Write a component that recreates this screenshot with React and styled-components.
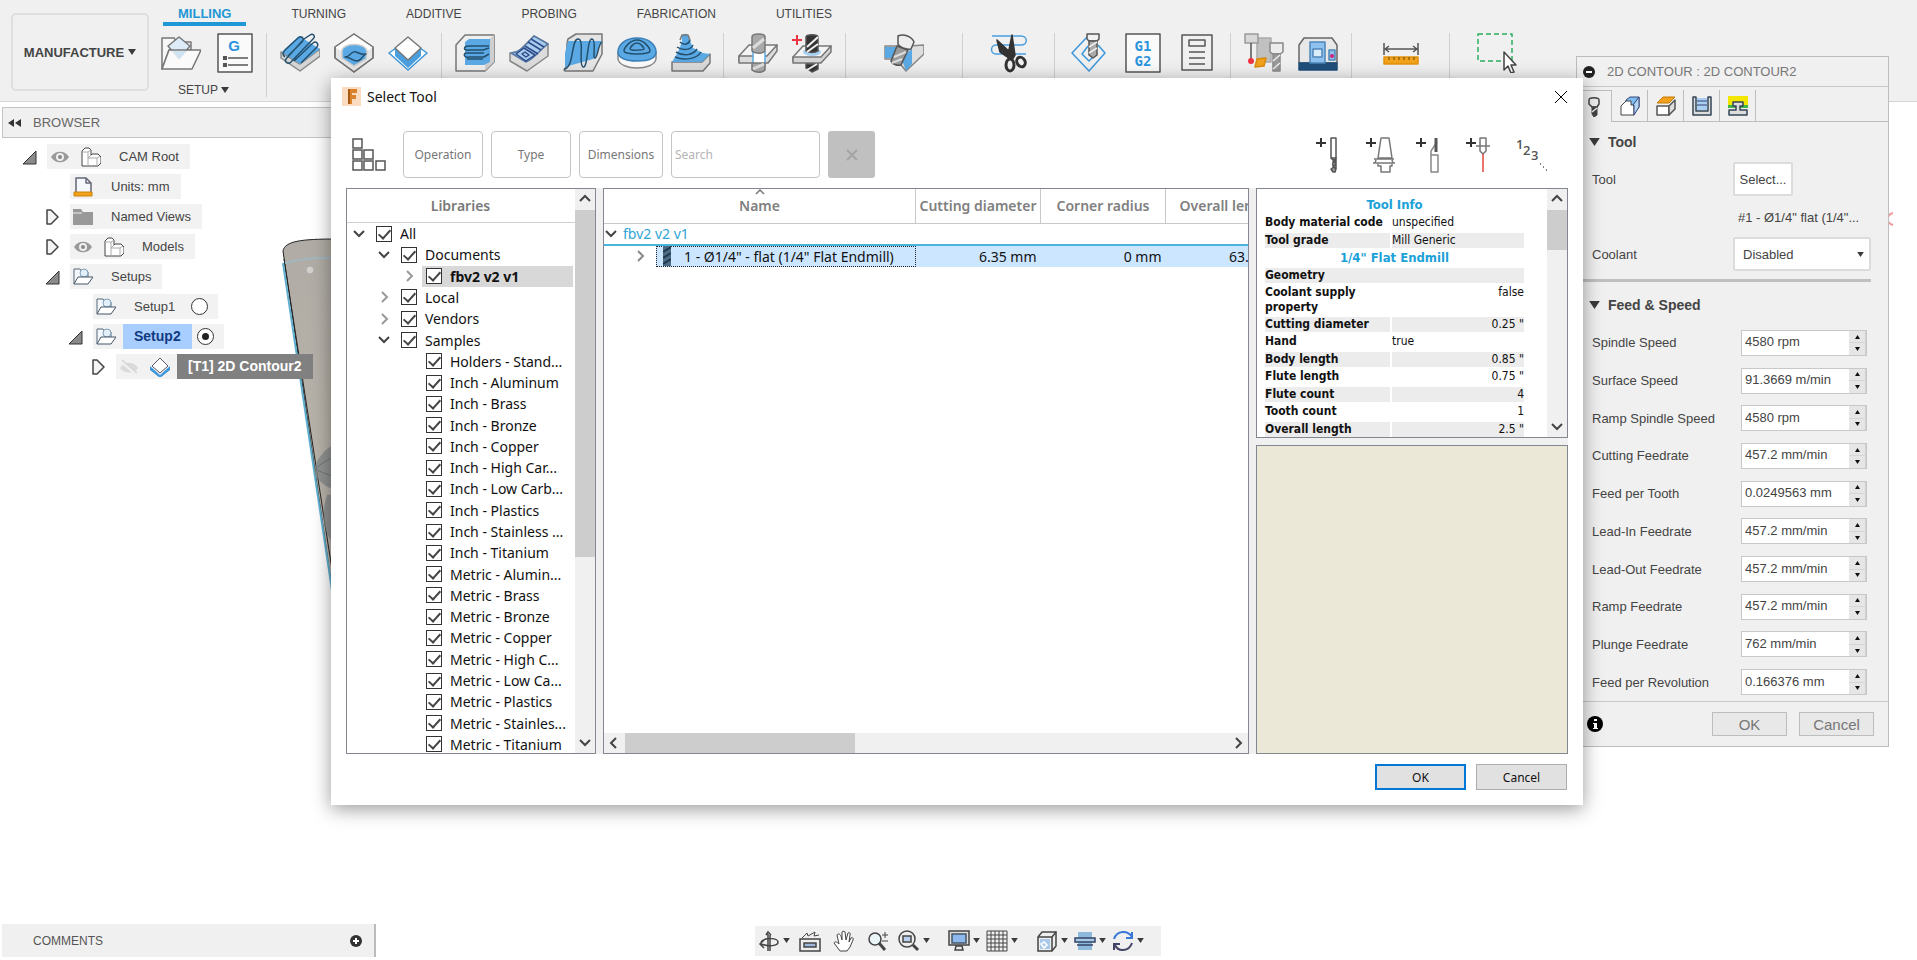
import React from 'react'
import styled, { createGlobalStyle } from 'styled-components';

const tabs = ['MILLING', 'TURNING', 'ADDITIVE', 'PROBING', 'FABRICATION', 'UTILITIES'];

const libraries = [
  { name: 'All', level: 0, open: true },
  { name: 'Documents', level: 1, open: true },
  { name: 'fbv2 v2 v1', level: 2, open: false, active: true },
  { name: 'Local', level: 1, open: false },
  { name: 'Vendors', level: 1, open: false },
  { name: 'Samples', level: 1, open: true },
  ...[
    'Holders - Stand...', 'Inch - Aluminum', 'Inch - Brass', 'Inch - Bronze', 'Inch - Copper',
    'Inch - High Car...', 'Inch - Low Carb...', 'Inch - Plastics', 'Inch - Stainless ...', 'Inch - Titanium',
    'Metric - Alumin...', 'Metric - Brass', 'Metric - Bronze', 'Metric - Copper', 'Metric - High C...',
    'Metric - Low Ca...', 'Metric - Plastics', 'Metric - Stainles...', 'Metric - Titanium',
  ].map((name) => ({ name, level: 2 })),
];

const geometry = [
  ['Coolant supply property', 'false', true],
  ['Cutting diameter', '0.25 "', true],
  ['Hand', 'true', false],
  ['Body length', '0.85 "', true],
  ['Flute length', '0.75 "', true],
  ['Flute count', '4', true],
  ['Tooth count', '1', true],
  ['Overall length', '2.5 "', true],
];

const feeds = [
  ['Spindle Speed', '4580 rpm'],
  ['Surface Speed', '91.3669 m/min'],
  ['Ramp Spindle Speed', '4580 rpm'],
  ['Cutting Feedrate', '457.2 mm/min'],
  ['Feed per Tooth', '0.0249563 mm'],
  ['Lead-In Feedrate', '457.2 mm/min'],
  ['Lead-Out Feedrate', '457.2 mm/min'],
  ['Ramp Feedrate', '457.2 mm/min'],
  ['Plunge Feedrate', '762 mm/min'],
  ['Feed per Revolution', '0.166376 mm'],
];

/* ---------- icons ---------- */

const Icon = ({ w = 40, h = w, children }) => (
  <svg width={w} height={h} viewBox={`0 0 ${w} ${h}`} fill="none" stroke="#555" strokeWidth="1.5" strokeLinejoin="round" aria-hidden="true">
    {children}
  </svg>
);

const Caret = ({ w = 8, h = 6 }) => (
  <svg width={w} height={h} viewBox="0 0 8 6" aria-hidden="true"><path d="M0 0h8L4 6z" fill="#3a3a3a" /></svg>
);

const Chevron = ({ dir = 'down', color = '#444' }) => {
  const d = { down: 'M2 4l5 5 5-5', up: 'M2 9l5-5 5 5', right: 'M5 2l5 5-5 5', left: 'M9 2L4 7l5 5' }[dir];
  return <svg width="14" height="14" viewBox="0 0 14 14" aria-hidden="true"><path d={d} fill="none" stroke={color} strokeWidth="2" /></svg>;
};

const FolderIcon = () => (
  <Icon>
    <path d="M1 5h12l3 4h14v8H8L1 36z" fill="#f7f7f7" stroke="#777" />
    <path d="M18 4L7 13l11 13 11-13z" fill="#dcebf7" stroke="#777" />
    <path d="M8 17h32l-9 19H1z" fill="#fbfbfb" fillOpacity=".85" stroke="#777" />
    <path d="M12 18l6 8 8-8z" fill="#cfe2f2" stroke="none" />
  </Icon>
);

const PostIcon = () => (
  <Icon>
    <rect x="3" y="1" width="34" height="38" fill="#fafafa" />
    <text x="19" y="18" fill="#2a93dc" stroke="none" fontFamily="Liberation Sans, sans-serif" fontSize="15" fontWeight="700" textAnchor="middle">G</text>
    <path d="M13 25h20M13 32h20" />
    <path d="M8 23h4v4H8zM8 30h4v4H8z" fill="#555" stroke="none" />
  </Icon>
);

const AdaptiveIcon = () => (
  <Icon>
    <path d="M1 25l19 13 20-15v-7L20 31 1 19z" fill="#d5d5d5" stroke="#888" />
    <path d="M2 19L19 3l21 13-20 15z" fill="#5aa9e4" stroke="none" />
    <path d="M5 24c-3-2-2-5 0-7L18 5c3-3 7 0 4 4L8 23M24 6l6-4c3-2 6 1 3 4L11 29c-3 3-7 0-5-3L24 6M14 28L33 10c3-3 6 1 4 4L21 30" stroke="#24506f" />
  </Icon>
);

const PocketIcon = () => (
  <Icon>
    <path d="M20 1l19 13v11L20 39 1 25V14z" fill="#e6e6e6" stroke="#777" />
    <path d="M20 1l19 13-19 13L1 14z" fill="#fff" stroke="none" />
    <path d="M20 1l19 13v11L20 39 1 25V14z" stroke="#777" />
    <path d="M8 17c2-7 22-8 25 1l-1 8-12 7-12-8z" fill="#5aa9e4" stroke="#ccc" />
    <path d="M11 24c5 1 6-7 11-5s7 3 10 2c-4 1-4 7-9 7s-6-4-12-4z" stroke="#24506f" />
  </Icon>
);

const ContourIcon = () => (
  <Icon>
    <path d="M1 20l7-5v6l12 11 12-11v-6l7 5-19 17z" fill="#fff" stroke="#3d97db" />
    <path d="M7 15l13 12 13-12v8L20 35 7 23z" fill="#4a9fdf" stroke="none" />
    <path d="M20 4l13 11-13 12L7 15z" fill="#fff" stroke="#777" />
  </Icon>
);

const RoughingIcon = () => (
  <Icon>
    <path d="M1 12l9-10h29v27l-9 9H1z" fill="#efefef" stroke="#777" />
    <path d="M39 2v27l-9 9V10z" fill="#cfcfcf" stroke="none" />
    <path d="M10 9l4-3h21v23l-6 3H10z" fill="#5aa9e4" stroke="none" />
    <path d="M34 13H14c-6 0-6 5 0 4h14l6-2M29 20H11c-3 1-2 5 3 4h15l5-3M28 26H12" stroke="#24506f" />
  </Icon>
);

const ParallelIcon = () => (
  <Icon>
    <path d="M1 20l8-1L25 3l14 8v12L18 38 1 28z" fill="#dcdcdc" stroke="#888" />
    <path d="M2 20c9 0 14-8 23-17l14 8C31 16 26 26 17 29z" fill="#a9cdec" stroke="#5b7ba8" />
    <path d="M22 6l13 8M19 9l13 8M16 13l13 8" stroke="#2d4a8a" />
    <path d="M7 21l8-6 11 7-9 6zM13 21l3-2 4 3-3 2z" stroke="#2d4a8a" />
  </Icon>
);

const ScallopIcon = () => (
  <Icon>
    <path d="M1 37c5-2 1-24 4-31l8-5h26v20l-9 17H2z" fill="#e4e4e4" stroke="#777" />
    <path d="M2 20L5 8h34c-6 5-3 14-9 18L2 34z" fill="#5aa9e4" stroke="none" />
    <path d="M1 36c10 0 7-30 14-30s0 26 5 28 4-29 9-28 0 20 3 19 3-14 7-16" stroke="#24506f" />
  </Icon>
);

const RampIcon = () => (
  <Icon>
    <path d="M1 19v7c2 12 36 12 38 0v-7z" fill="#fafafa" stroke="#888" />
    <path d="M1 19C1 12 8 5 20 5s19 7 19 14-8 9-19 9S1 25 1 19z" fill="#5aa9e4" stroke="#3a7fb8" />
    <path d="M20 7c7 0 13 8 13 11 0 4-26 4-26 0 0-3 6-11 13-11zm0 3c4 0 7 5 7 6s-14 2-14 0c0-1 3-6 7-6z" stroke="#24506f" />
  </Icon>
);

const SpiralIcon = () => (
  <Icon>
    <path d="M1 29h30l8-8v9l-7 8H1z" fill="#d9d9d9" stroke="#777" />
    <path d="M11 3c2-3 5-3 6 0l5 12 10 5 7 1-8 8H1l6-10 4-10z" fill="#5aa9e4" stroke="none" />
    <path d="M9 9c4 4 9 2 10-2M6 14c6 4 14 3 16-2M5 19c8 5 17 3 21-3M4 24c9 4 22 2 26-5" stroke="#24506f" />
    <path d="M9 7l2-5h6l2 5" stroke="#777" />
  </Icon>
);

const DrillIcon = () => (
  <Icon>
    <path d="M1 23L11 12h28L30 28H1z" fill="#f4f4f4" stroke="#777" />
    <path d="M1 23h28l10-11v6L30 30H1z" fill="#dcdcdc" stroke="#777" />
    <path d="M15 19h12v14H15z" fill="#fff" stroke="#5aa9e4" />
    <path d="M14 4c0-4 13-4 13 0v14c-3 3-10 3-13 0zM14 30h13v7c-3 3-10 3-13 0z" fill="#a9a9a9" stroke="#777" />
    <path d="M15 15L26 6M15 36l11-5" stroke="#ddd" strokeWidth="3" />
  </Icon>
);

const HoleIcon = () => (
  <Icon>
    <path d="M1 24L11 13h28L28 28H1z" fill="#f4f4f4" stroke="#777" />
    <path d="M1 24h28l10-11v6L29 30H1z" fill="#d5d5d5" stroke="#777" />
    <path d="M5 2v10M0 7h10" stroke="#ef3340" strokeWidth="2" />
    <ellipse cx="20" cy="19" rx="9" ry="4" fill="#a8d0f0" stroke="none" />
    <path d="M14 4c0-3 12-3 12 0v14c-3 2-9 2-12 0zM14 31h12v5l-6 3-6-4z" fill="#333" />
    <path d="M15 14L26 4M15 19l11-8M15 37l10-6" stroke="#f2f2f2" strokeWidth="2" />
  </Icon>
);

const MultiAxisIcon = () => (
  <Icon>
    <path d="M1 13h24l15-1v9L22 38 12 26H1z" fill="#dedede" stroke="#888" />
    <path d="M1 14h12v11H1zM17 24l11-8v15l-6 7z" fill="#5aa9e4" stroke="none" />
    <path d="M13 13l11 4-7 15c-4 1-9-1-10-4z" fill="#9b9b9b" />
    <path d="M14 3c6-3 14 1 16 6l-3 7c-5 1-12-2-13-5z" fill="#eee" />
    <path d="M10 24l12-5M8 30l10-4" stroke="#ddd" strokeWidth="2" />
  </Icon>
);

const TrimIcon = () => (
  <Icon>
    <path d="M3 3h29c7 0 7 9 0 9H7c-6 0-6 9 0 9h30" stroke="#4a9fdf" />
    <path d="M23 2l3 20-3 5-4-5zM8 7l16 15-3 4-10-7z" fill="#333" stroke="#333" />
    <ellipse cx="21" cy="32" rx="4" ry="6" stroke="#333" strokeWidth="3" />
    <ellipse cx="32" cy="29" rx="4" ry="5" stroke="#333" strokeWidth="3" transform="rotate(-30 32 29)" />
  </Icon>
);

const SimulateIcon = () => (
  <Icon>
    <path d="M19 3L3 20l17 18 16-18-7-8M19 13l-6 8 7 7 7-7" stroke="#3d97db" />
    <path d="M18 1h12v5l-2 2H20l-2-2z" fill="#f2f2f2" />
    <path d="M20 8h8v14l-4 3-4-3z" fill="#aaa" />
    <path d="M20 14l8-5M20 20l8-5" stroke="#eee" />
  </Icon>
);

const GCodeIcon = () => (
  <Icon>
    <rect x="3" y="1" width="34" height="38" fill="#fafafa" />
    <g fill="#2a93dc" stroke="none" fontFamily="DejaVu Sans Mono, monospace" fontSize="14" fontWeight="700" textAnchor="middle">
      <text x="20" y="18">G1</text>
      <text x="20" y="33">G2</text>
    </g>
  </Icon>
);

const SheetIcon = () => (
  <Icon>
    <path d="M5 2h30v35H5zM12 7h16v6H12zM12 19h16M12 25h16M12 31h16" />
  </Icon>
);

const ToolLibIcon = () => (
  <Icon>
    <path d="M13 5h14v24H13z" fill="#c0c0c0" stroke="#aaa" />
    <path d="M1 1h13v9H1z" fill="#d8d8d8" stroke="#999" />
    <path d="M7 10v16" />
    <circle cx="7" cy="28" r="3" fill="#ef3340" stroke="none" />
    <path d="M13 26l9-1-2 8-9 1z" fill="#f2a21b" stroke="#d98a0a" />
    <path d="M26 10h13v9l-3 2h-7l-3-2z" fill="#ececec" stroke="#888" />
    <path d="M29 21h7v17h-7z" fill="#999" stroke="#888" />
    <path d="M29 28l7-6M29 36l7-6" stroke="#eee" />
  </Icon>
);

const MachineIcon = () => (
  <Icon>
    <path d="M1 12l5-7h28l5 7v18H1z" fill="#e8e8e8" stroke="#666" />
    <path d="M1 30h38v7H1z" fill="#1f4e79" stroke="#1f4e79" />
    <path d="M12 9h15v21H12z" fill="#8fc1ee" stroke="#4f87b8" />
    <path d="M15 16h9v8h-9z" fill="#dcecfa" stroke="#4f87b8" />
    <path d="M31 17h6v10h-6z" fill="#8fc1ee" stroke="#4f87b8" />
    <circle cx="34" cy="23" r="2" fill="#d0207a" stroke="none" />
  </Icon>
);

const MeasureIcon = () => (
  <Icon>
    <path d="M3 10v12M37 10v12M4 16h32M8 13l-4 3 4 3M32 13l4 3-4 3" />
    <path d="M3 24h34v7H3z" fill="#f2a21b" stroke="#e0930f" />
    <path d="M8 24v3M13 24v3M18 24v3M23 24v3M28 24v3M33 24v3" stroke="#6b4a0a" strokeWidth="1" />
  </Icon>
);

const SelectIcon = () => (
  <Icon>
    <path d="M1 1h34v27H1z" stroke="#27ae60" strokeDasharray="5 3" />
    <path d="M27 19v18l4-4 3 7 3-1-3-7h5z" fill="#fff" stroke="#444" />
  </Icon>
);

const ribbon = [
  { width: 175, label: '2D', icons: [AdaptiveIcon, PocketIcon, ContourIcon] },
  { width: 282, label: '3D', icons: [RoughingIcon, ParallelIcon, ScallopIcon, RampIcon, SpiralIcon] },
  { width: 122, label: 'Drilling', icons: [DrillIcon, HoleIcon] },
  { width: 117, label: 'Multi-axis', icons: [MultiAxisIcon] },
  { width: 92, label: 'Modify', icons: [TrimIcon] },
  { width: 176, label: 'Actions', icons: [SimulateIcon, GCodeIcon, SheetIcon] },
  { width: 121, label: 'Manage', icons: [ToolLibIcon, MachineIcon] },
  { width: 98, label: 'Inspect', icons: [MeasureIcon] },
  { width: 94, label: 'Select', icons: [SelectIcon], last: true },
];

const EyeIcon = () => (
  <Icon w={20}>
    <path d="M1 10c4-7 14-7 18 0-4 7-14 7-18 0z" fill="#999" stroke="none" />
    <circle cx="10" cy="10" r="4" fill="#eee" stroke="none" />
    <circle cx="10" cy="10" r="2" fill="#888" stroke="none" />
  </Icon>
);

const HiddenEyeIcon = () => (
  <Icon w={20}>
    <path d="M1 11c4-7 14-7 18 0-4 6-14 6-18 0z" fill="#dadada" stroke="none" />
    <path d="M2 4l15 13" stroke="#f0f0f0" strokeWidth="3" />
    <path d="M3 3l15 13" stroke="#d5d5d5" />
  </Icon>
);

const BodyIcon = () => (
  <Icon w={20}>
    <path d="M1 4l3-3h4l2 2v5l1-1h6l3 3v6l-3 3H1z" fill="#fff" stroke="#444" strokeWidth="1" />
    <path d="M1 5h6v14M7 11h9v7M7 5l3-2M7 11l3-3M16 11l3-2" stroke="#aaa" strokeWidth="1" />
  </Icon>
);

const UnitsIcon = () => (
  <Icon w={20}>
    <path d="M3 15V1h10l5 5v9" fill="#f5f8fc" stroke="#667" />
    <path d="M13 1v5h5" stroke="#667" />
    <path d="M1 15h18v4H1z" fill="#f2a21b" stroke="#c98208" strokeWidth="1" />
  </Icon>
);

const GreyFolderIcon = () => (
  <Icon w={20}><path d="M0 2h8l2 3h10v13H0z" fill="#999" stroke="none" /><path d="M0 6h9" stroke="#eee" strokeWidth="1" /></Icon>
);

const SetupIcon = () => (
  <Icon w={20}>
    <path d="M1 17V2h6l2 3h6v5" fill="#f4f8fc" stroke="#567" strokeWidth="1" />
    <circle cx="11" cy="6" r="4" fill="#e3f0fa" stroke="#7f9fb8" strokeWidth="1" />
    <path d="M5 10h15l-5 7H1z" fill="#fff" stroke="#456" strokeWidth="1" />
  </Icon>
);

const SmallContourIcon = () => (
  <Icon w={20}>
    <path d="M0 10l10 9 10-9v2l-10 8L0 12z" fill="#3d97db" stroke="#3d97db" />
    <path d="M10 1l8 8-8 7-8-7z" fill="#fff" stroke="#556" strokeWidth="1" />
  </Icon>
);

const Toggle = ({ open }) => (
  <Icon w={15} h={16}>
    {open
      ? <path d="M1 15h13V2z" fill="#8a8a8a" stroke="#333" strokeWidth="1" />
      : <path d="M2 1h4l7 7-7 7H2z" fill="#f4f4f4" stroke="#444" />}
  </Icon>
);

const settingTabs = [
  <Icon w={20}><path d="M5 3c0-3 10-3 10 0v4l-2 3H8L5 7z" fill="#eee" stroke="#444" /><path d="M8 10h5v8l-3 2-2-3z" fill="#444" stroke="#444" strokeWidth="1" /><path d="M8 15l5-4" stroke="#eee" /></Icon>,
  <Icon w={20}><path d="M6 4l4-3h9v10l-6 8-1-9H6z" fill="#7fbdf0" stroke="#347" strokeWidth="1" /><path d="M1 10l5-5h5v4h3v10H1z" fill="#fff" stroke="#444" strokeWidth="1" /><path d="M13 9l6-8v10l-5 8V9z" fill="#b5d6f2" stroke="#347" strokeWidth="1" /></Icon>,
  <Icon w={20}><path d="M1 10h12v9H1z" fill="#fff" stroke="#555" /><path d="M13 10l6-6v9l-6 6z" fill="#ddd" stroke="#555" /><path d="M1 7l6-6h12l-6 6z" fill="#f2a21b" stroke="#c27a08" strokeWidth="1" /></Icon>,
  <Icon w={20}><path d="M5 2h10v12H5z" fill="#a9d0f2" stroke="none" /><path d="M5 5h10M5 9h10" stroke="#347" strokeWidth="1" /><path d="M1 1h3v14h12V1h3v18H1z" fill="#ddd" stroke="#345" /></Icon>,
  <Icon w={20}><path d="M0 0h20v11H0z" fill="#f3e600" stroke="none" /><path d="M0 9h20v3H0z" fill="#43b649" stroke="none" /><path d="M5 6h10v4h-3v4h7v5H1v-5h7v-4H5z" fill="#ddd" stroke="#345" /></Icon>,
];

const toolIcons = [
  ['New mill', <><path d="M15 1h5v20h-5z" /><path d="M15 21c5 3 6 7 0 11l2 3h2l1-3V21c-4 4-5 8 0 11" fill="#999" /></>],
  ['New holder', <><path d="M15 1h8l3 20H12zM8 22h20M7 26h22M10 23l-1 3M26 23l1 3M12 27v2h3v6h9v-6h2v-2" stroke="#777" /></>],
  ['New turning tool', <><path d="M15 18v-4l6-9M15 18h7v17h-7z" stroke="#888" /><path d="M20 1v14" strokeWidth="3" /></>],
  ['New probe', <><path d="M14 1h6v13l-3 3-3-3zM10 9h14" stroke="#777" /><path d="M17 17v18" stroke="#e0463c" /></>],
];

const navIcons = [
  ['Orbit', true, <><path d="M10 21V4M8 5l2-3 3 3M12 5v16" /><path d="M3 12c4-5 17-4 17 0s-9 5-17 2M6 10l-4 4 4 4" /></>],
  ['Look at', false, <><path d="M1 9h20v12H1z" fill="#eee" /><path d="M5 13h12v4H5z" fill="#9db8dc" /><path d="M3 8l5-5 1 3 7-4-1 4 5-1" strokeWidth="1" /></>],
  ['Pan', false, <path d="M7 21l-6-8c1-2 3-1 5 1L4 5c1-2 3-1 4 1l1 4V2c1-1 3-1 3 0l1 8 2-7c1-1 3 0 2 2l-1 7 2-4c1-1 3 0 2 2l-3 7-3 4z" fill="#fff" strokeWidth="1" />],
  ['Zoom', false, <><circle cx="8" cy="9" r="6" fill="#eaf5f7" /><path d="M12 13l6 7" strokeWidth="3" /><path d="M18 2v6M15 5h6M15 11h6" strokeWidth="1" /></>],
  ['Fit', true, <><circle cx="9" cy="9" r="8" fill="#eee" /><path d="M5 6h8v6H5z" fill="#b8d0ee" /><path d="M15 15l5 5" strokeWidth="3" /></>],
  ['Display settings', true, <><path d="M1 1h20v14H1z" fill="#ddd" /><path d="M4 4h14v9H4z" fill="#8db9ef" stroke="#456" /><path d="M7 20h8l-1-4H8z" fill="#eee" /></>],
  ['Grid', true, <path d="M1 1h20v20H1zM5 1v20M9 1v20M13 1v20M17 1v20M1 5h20M1 9h20M1 13h20M1 17h20" strokeWidth="1" />],
  ['Viewports', true, <><path d="M2 7l4-5h14v14l-4 5H2z" fill="#eee" /><path d="M2 7h14v14M16 7l4-5" /><path d="M4 9h10v10H4z" fill="#a9c8ea" stroke="none" /><path d="M5 14l3-2 3 3-3 3z" stroke="#fff" /></>],
  ['Analysis', true, <><path d="M4 2h14v18H4z" fill="#8db9dc" stroke="none" /><path d="M1 8h20v4H1zM3 15h16" fill="#a9cbe8" stroke="#346" /></>],
  ['Refresh', true, <><path d="M2 9c3-9 14-9 18-2M20 2v6h-6" stroke="#3a78d8" strokeWidth="2" /><path d="M20 13c-3 9-14 9-17 2M2 20v-6h6" stroke="#446" strokeWidth="2" /></>],
];

/* ---------- page parts ---------- */

const TreeRow = ({ level, open, icons, label, state, radio }) => (
  <BrowserRow $level={level}>
    <ToggleSlot>{open !== undefined && <Toggle open={open} />}</ToggleSlot>
    <RowBody>
      <RowIcons>{icons}</RowIcons>
      <RowLabel $state={state}>{label}</RowLabel>
      {radio !== undefined && <Radio type="radio" name="setup" aria-label={`Activate ${label}`} defaultChecked={radio} />}
    </RowBody>
  </BrowserRow>
);

const Ribbon = () => (
  <Header>
    <Workspace>MANUFACTURE <Caret /></Workspace>
    <RibbonMain>
      <TabBar>
        {tabs.map((tab, i) => <Tab href="#" key={tab} $active={i === 0}>{tab}</Tab>)}
      </TabBar>
      <Groups>
        <Group $width={118}>
          <GroupTools>
            <ToolButton aria-label="New setup"><FolderIcon /></ToolButton>
            <ToolButton aria-label="Post process"><PostIcon /></ToolButton>
          </GroupTools>
          <GroupLabel>SETUP <Caret /></GroupLabel>
        </Group>
        {ribbon.map((group) => (
          <Group key={group.label} $width={group.width} $last={group.last}>
            <GroupTools>
              {group.icons.map((Glyph, i) => (
                <ToolButton key={i} aria-label={`${group.label} ${i + 1}`}><Glyph /></ToolButton>
              ))}
            </GroupTools>
          </Group>
        ))}
      </Groups>
    </RibbonMain>
  </Header>
);

const Browser = () => (
  <BrowserPanel>
    <BrowserTitle>
      <svg width="13" height="8" viewBox="0 0 13 8" aria-hidden="true"><path d="M6 0v8L0 4zM13 0v8L7 4z" fill="#333" /></svg>
      BROWSER
    </BrowserTitle>
    <TreeRow level={0} open icons={<><EyeIcon /><BodyIcon /></>} label="CAM Root" />
    <TreeRow level={1} icons={<UnitsIcon />} label="Units: mm" />
    <TreeRow level={1} open={false} icons={<GreyFolderIcon />} label="Named Views" />
    <TreeRow level={1} open={false} icons={<><EyeIcon /><BodyIcon /></>} label="Models" />
    <TreeRow level={1} open icons={<SetupIcon />} label="Setups" />
    <TreeRow level={2} icons={<SetupIcon />} label="Setup1" radio={false} />
    <TreeRow level={2} open icons={<SetupIcon />} label="Setup2" state="active" radio />
    <TreeRow level={3} open={false} icons={<><HiddenEyeIcon /><SmallContourIcon /></>} label="[T1] 2D Contour2" state="selected" />
  </BrowserPanel>
);

const Model = () => (
  <ModelView width="80" height="380" viewBox="0 0 80 380" aria-hidden="true">
    <defs>
      <linearGradient id="plate" x1="0" y1="0" x2="0" y2="1">
        <stop offset="0" stopColor="#b0aca5" />
        <stop offset="1" stopColor="#bdb6ac" />
      </linearGradient>
    </defs>
    <path d="M6 22C8 12 24 10 60 10h20v370H58z" fill="url(#plate)" stroke="#222" />
    <path d="M6 34l50 334" stroke="#5fb0d0" strokeWidth="2" fill="none" />
    <path d="M7 30l51 330" stroke="#222" strokeWidth="1" fill="none" />
    <path d="M8 34c20-5 40-6 72-6" stroke="#9fb8c2" strokeWidth="2" fill="none" />
    <circle cx="33" cy="41" r="4" fill="#d2d0cc" stroke="#aaa" />
    <path d="M80 212c-28-2-40 16-43 30 4 14 20 22 43 22zM50 266c-6 18-4 36 6 48l24 2v-54z" fill="#85898a" fillOpacity=".8" />
    <path d="M38 240c14-12 26-16 42-18M38 240c12 6 24 10 42 10" stroke="#6c7579" fill="none" />
  </ModelView>
);

const Settings = () => (
  <Panel>
    <PanelTitle>
      <svg width="12" height="12" viewBox="0 0 12 12" aria-hidden="true"><circle cx="6" cy="6" r="6" fill="#222" /><path d="M3 6h6" stroke="#fff" strokeWidth="2" /></svg>
      2D CONTOUR : 2D CONTOUR2
    </PanelTitle>
    <PanelTabs>
      {settingTabs.map((icon, i) => <PanelTab key={i} aria-label={`Page ${i + 1}`} $active={i === 0}>{icon}</PanelTab>)}
      <PanelTabsRest />
    </PanelTabs>
    <SectionTitle><Caret w={11} h={8} />Tool</SectionTitle>
    <Field>
      <label htmlFor="pick">Tool</label>
      <PickButton id="pick">Select...</PickButton>
    </Field>
    <ToolName>#1 - Ø1/4" flat (1/4"...</ToolName>
    <Field>
      <label htmlFor="coolant">Coolant</label>
      <SelectWrap>
        <Coolant id="coolant" defaultValue="Disabled"><option>Disabled</option><option>Flood</option></Coolant>
        <Caret w={7} h={5} />
      </SelectWrap>
    </Field>
    <Divider />
    <SectionTitle $tight><Caret w={11} h={8} />Feed &amp; Speed</SectionTitle>
    <FeedList>
      {feeds.map(([name, value]) => (
        <FeedRow key={name}>
          <label htmlFor={name}>{name}</label>
          <SpinBox>
            <input id={name} defaultValue={value} />
            <Spinner>
              <button aria-label={`Increase ${name}`}><svg width="5" height="4" viewBox="0 0 5 4"><path d="M0 4h5L2.500 0z" /></svg></button>
              <button aria-label={`Decrease ${name}`}><svg width="5" height="4" viewBox="0 0 5 4"><path d="M0 0h5L2.500 4z" /></svg></button>
            </Spinner>
          </SpinBox>
        </FeedRow>
      ))}
    </FeedList>
    <PanelFooter>
      <svg width="16" height="16" viewBox="0 0 16 16" aria-hidden="true"><circle cx="8" cy="8" r="8" fill="#000" /><path d="M7 3h3v2H7zM6 7h4v5h1v1H6v-1h1V8H6z" fill="#fff" /></svg>
      <PanelButton>OK</PanelButton>
      <PanelButton>Cancel</PanelButton>
    </PanelFooter>
  </Panel>
);

const LibraryPane = () => (
  <Pane>
    <PaneMain>
      <PaneHead>Libraries</PaneHead>
      <LibraryList>
        {libraries.map((lib) => (
          <LibraryItem key={lib.name} $level={lib.level}>
            <Expander>{lib.open !== undefined && <Chevron dir={lib.open ? 'down' : 'right'} color={lib.open ? '#444' : '#999'} />}</Expander>
            <CheckLabel $active={lib.active}>
              <Check type="checkbox" defaultChecked />
              {lib.name}
            </CheckLabel>
          </LibraryItem>
        ))}
      </LibraryList>
    </PaneMain>
    <ScrollBar>
      <Chevron dir="up" />
      <Thumb $size={347} />
      <Chevron />
    </ScrollBar>
  </Pane>
);

const ToolsPane = () => (
  <Pane $column>
    <TableWrap>
      <ToolsTable>
        <colgroup><col className="name" /><col /><col /><col /></colgroup>
        <thead>
          <tr>
            <th>
              <SortMark width="10" height="6" viewBox="0 0 10 6" aria-hidden="true"><path d="M1 5l4-4 4 4" fill="none" stroke="#777" strokeWidth="1.500" /></SortMark>
              Name
            </th>
            <th>Cutting diameter</th>
            <th>Corner radius</th>
            <th>Overall length</th>
          </tr>
        </thead>
        <tbody>
          <GroupRow><td colSpan="4"><div><Chevron />fbv2 v2 v1</div></td></GroupRow>
          <ToolRow>
            <td>
              <NameCell>
                <Chevron dir="right" color="#888" />
                <div>
                  <svg width="8" height="20" viewBox="0 0 8 20" aria-hidden="true"><path d="M0 0h8v20H0z" fill="#4a6a86" /><path d="M0 6l8-5M0 12l8-5M0 18l8-5" stroke="#22384c" strokeWidth="2" /></svg>
                  1 - Ø1/4" - flat (1/4" Flat Endmill)
                </div>
              </NameCell>
            </td>
            <td>6.35 mm</td>
            <td>0 mm</td>
            <td>63.5 mm</td>
          </ToolRow>
        </tbody>
      </ToolsTable>
    </TableWrap>
    <ScrollBar $horizontal>
      <Chevron dir="left" />
      <Thumb $horizontal $size={230} />
      <Chevron dir="right" />
    </ScrollBar>
  </Pane>
);

const InfoPane = () => (
  <InfoColumn>
    <Pane>
      <InfoBody>
        <InfoTable>
          <colgroup><col className="label" /><col /></colgroup>
          <tbody>
            <tr><th colSpan="2" className="title">Tool Info</th></tr>
            <InfoRow><th>Body material code</th><td>unspecified</td></InfoRow>
            <InfoRow $shade><th>Tool grade</th><td>Mill Generic</td></InfoRow>
            <tr><th colSpan="2" className="title">1/4" Flat Endmill</th></tr>
            <InfoRow $shade><th colSpan="2">Geometry</th></InfoRow>
            {geometry.map(([name, value, right], i) => (
              <InfoRow key={name} $shade={i % 2 === 1} $right={right}><th>{name}</th><td>{value}</td></InfoRow>
            ))}
          </tbody>
        </InfoTable>
      </InfoBody>
      <ScrollBar>
        <Chevron dir="up" />
        <Thumb $size={40} />
        <Chevron />
      </ScrollBar>
    </Pane>
    <Preview />
  </InfoColumn>
);

const SelectTool = () => (
  <Overlay>
    <Dialog role="dialog" aria-label="Select Tool">
      <TitleBar>
        <svg width="19" height="19" viewBox="0 0 19 19" aria-hidden="true">
          <rect width="19" height="19" fill="#fbdcc0" />
          <path d="M6 2h9v4h-5v2h4v4h-4v5H6z" fill="#d9822b" />
          <path d="M6 2h2v15H6z" fill="#a85a14" />
        </svg>
        <h1>Select Tool</h1>
        <CloseButton aria-label="Close"><svg width="12" height="12" viewBox="0 0 12 12"><path d="M0 0l12 12M12 0L0 12" stroke="#000" /></svg></CloseButton>
      </TitleBar>
      <FilterBar>
        <svg width="34" height="34" viewBox="0 0 34 34" fill="none" stroke="#555" strokeWidth="1.500" aria-hidden="true">
          <path d="M1 1h9v9H1zM1 12h9v9H1zM12 12h9v9h-9zM1 23h9v9H1zM12 23h9v9h-9zM24 23h9v9h-9z" />
        </svg>
        <Filters>
          <FilterButton>Operation</FilterButton>
          <FilterButton>Type</FilterButton>
          <FilterButton $wide>Dimensions</FilterButton>
          <SearchBox type="text" aria-label="Search" placeholder="Search" />
          <ClearButton aria-label="Clear"><svg width="12" height="12" viewBox="0 0 12 12"><path d="M1 1l10 10M11 1L1 11" stroke="#a4a4a4" strokeWidth="2" /></svg></ClearButton>
        </Filters>
        <NewTools>
          {toolIcons.map(([name, art]) => (
            <ToolButton key={name} aria-label={name}>
              <Icon w={32} h={36}><path d="M5 1v9M0 6h10" stroke="#333" strokeWidth="2" />{art}</Icon>
            </ToolButton>
          ))}
          <ToolButton aria-label="Renumber">
            <Icon w={32} h={36}>
              <g fill="#555" stroke="none" fontFamily="Open Sans, sans-serif" fontSize="13" fontWeight="600">
                <text x="0" y="12">1</text><text x="7" y="18">2</text><text x="15" y="23">3</text>
              </g>
              <path d="M24 27h1M27 30h1M30 33h1" />
            </Icon>
          </ToolButton>
        </NewTools>
      </FilterBar>
      <Panes>
        <LibraryPane />
        <ToolsPane />
        <InfoPane />
      </Panes>
      <Actions>
        <DialogButton $primary>OK</DialogButton>
        <DialogButton>Cancel</DialogButton>
      </Actions>
    </Dialog>
  </Overlay>
);

const BottomBar = () => (
  <Footer>
    <Comments>
      COMMENTS
      <svg width="12" height="12" viewBox="0 0 12 12" aria-hidden="true"><circle cx="6" cy="6" r="6" fill="#333" /><path d="M3 6h6M6 3v6" stroke="#fff" strokeWidth="2" /></svg>
    </Comments>
    <NavBar>
      {navIcons.map(([name, menu, art]) => (
        <NavButton key={name} aria-label={name} $menu={menu} $gap={name === 'Fit' || name === 'Grid'}>
          <svg width="22" height="22" viewBox="0 0 22 22" fill="none" stroke="#444" strokeWidth="1.500" aria-hidden="true">{art}</svg>
          {menu && <Caret w={7} h={5} />}
        </NavButton>
      ))}
    </NavBar>
  </Footer>
);

const App = () => {
  return (
    <Page>
      <GlobalStyle />
      <Ribbon />
      <Canvas>
        <Model />
        <Browser />
        <Warning width="8" height="14" viewBox="0 0 8 14" aria-hidden="true"><path d="M7 1C0 3 0 11 7 13" fill="none" stroke="#f59a9a" strokeWidth="2" /></Warning>
      </Canvas>
      <BottomBar />
      <Settings />
      <SelectTool />
    </Page>
  )
}

/* ---------- styles ---------- */

const GlobalStyle = createGlobalStyle`
  * {
    box-sizing: border-box;
  }
  body {
    margin: 0;
    background: #fff;
    color: #444;
    font: 13px "Liberation Sans", Arial, sans-serif;
  }
  button, input, select {
    font: inherit;
    color: inherit;
    padding: 0;
    margin: 0;
  }
  svg {
    flex: none;
    display: block;
  }
`;

const Page = styled.div`
  position: relative;
  display: flex;
  flex-direction: column;
  min-height: 100vh;
  overflow: hidden;
`;

const Header = styled.header`
  display: flex;
  align-items: flex-start;
  height: 102px;
  padding-left: 11px;
  background: #f0f0f0;
  border-bottom: 1px solid #d4d4d4;
`;
const Workspace = styled.button`
  display: flex;
  align-items: center;
  justify-content: center;
  gap: 4px;
  width: 138px;
  height: 78px;
  margin-top: 13px;
  background: none;
  border: 2px solid #dedede;
  border-radius: 5px;
  font-weight: 700;
`;
const RibbonMain = styled.div`
  flex: 1;
`;
const TabBar = styled.nav`
  display: flex;
  gap: 30px;
  padding-left: 14px;
`;
const Tab = styled.a`
  height: 26px;
  padding: 0 15px;
  font-size: ${(p) => (p.$active ? '13px' : '12px')};
  font-weight: ${(p) => (p.$active ? 700 : 400)};
  line-height: 28px;
  color: ${(p) => (p.$active ? '#1f97d4' : '#444')};
  border-bottom: 4px solid ${(p) => (p.$active ? '#1f97d4' : 'transparent')};
  text-decoration: none;
  white-space: nowrap;
`;
const Groups = styled.div`
  display: flex;
  padding-top: 7px;
`;
const Group = styled.div`
  width: ${(p) => p.$width}px;
  height: 64px;
  border-right: ${(p) => (p.$last ? 'none' : '1px solid #d0d0d0')};
`;
const GroupTools = styled.div`
  display: flex;
  justify-content: center;
  gap: 14px;
`;
const ToolButton = styled.button`
  display: block;
  background: none;
  border: none;
`;
const GroupLabel = styled.div`
  display: flex;
  align-items: center;
  justify-content: center;
  gap: 3px;
  padding: 10px 8px 0 0;
  font-size: 12px;
`;

const Canvas = styled.main`
  position: relative;
  flex: 1;
  padding: 5px 2px;
`;
const ModelView = styled.svg`
  position: absolute;
  top: 127px;
  left: 277px;
`;
const Warning = styled.svg`
  position: absolute;
  top: 110px;
  right: 23px;
`;
const BrowserPanel = styled.aside`
  position: relative;
  display: flex;
  flex-direction: column;
  gap: 5px;
  width: 374px;
`;
const BrowserTitle = styled.div`
  display: flex;
  align-items: center;
  gap: 12px;
  height: 31px;
  margin-bottom: 1px;
  padding-left: 5px;
  background: #f0f0f0;
  border: 1px solid #c4c4c4;
  color: #666;
`;
const BrowserRow = styled.div`
  display: flex;
  align-items: center;
  height: 25px;
  padding-left: ${(p) => 20 + p.$level * 23}px;
`;
const ToggleSlot = styled.div`
  width: 25px;
`;
const RowBody = styled.div`
  display: flex;
  align-items: center;
  height: 25px;
  background: #f2f2f2;
`;
const RowIcons = styled.div`
  display: flex;
  gap: 11px;
  padding: 0 7px 0 3px;
`;
const stateColors = {
  active: 'background: #a8cdff; color: #123a80; font: 700 14px "Liberation Sans", Arial, sans-serif; line-height: 25px;',
  selected: 'background: #808080; color: #fff; font: 700 14px "Liberation Sans", Arial, sans-serif; line-height: 25px;',
};
const RowLabel = styled.span`
  padding: 0 11px;
  line-height: 25px;
  ${(p) => stateColors[p.$state]}
`;
const Radio = styled.input`
  appearance: none;
  display: grid;
  place-content: center;
  width: 17px;
  height: 17px;
  margin: 0 10px 0 5px;
  border: 1px solid #333;
  border-radius: 50%;
  background: #fff;
  &:checked::after {
    content: '';
    width: 7px;
    height: 7px;
    border-radius: 50%;
    background: #222;
  }
`;

const Panel = styled.aside`
  position: absolute;
  top: 56px;
  right: 28px;
  width: 313px;
  background: #f0f0f0;
  border: 1px solid #bdbdbd;
`;
const PanelTitle = styled.div`
  display: flex;
  align-items: center;
  gap: 12px;
  height: 30px;
  padding-left: 6px;
  border-bottom: 1px solid #c8c8c8;
  color: #777;
`;
const PanelTabs = styled.div`
  display: flex;
  padding-top: 3px;
`;
const PanelTab = styled.button`
  display: grid;
  place-content: center;
  width: ${(p) => (p.$active ? 35 : 36)}px;
  height: 32px;
  background: none;
  border: solid #bdbdbd;
  border-width: ${(p) => (p.$active ? '1px 1px 0 0' : '0 1px 1px 0')};
`;
const PanelTabsRest = styled.div`
  flex: 1;
  border-bottom: 1px solid #bdbdbd;
`;
const SectionTitle = styled.h2`
  display: flex;
  align-items: center;
  gap: 8px;
  height: 20px;
  margin: ${(p) => (p.$tight ? '13px 0 9px 12px' : '10px 0 10px 12px')};
  font-size: 14px;
`;
const Field = styled.div`
  display: flex;
  align-items: center;
  height: 34px;
  padding-left: 15px;
  label {
    width: 141px;
  }
`;
const PickButton = styled.button`
  width: 60px;
  height: 34px;
  background: #fff;
  border: 2px solid #dcdcdc;
  border-radius: 2px;
`;
const ToolName = styled.div`
  padding: 14px 0 12px 161px;
  line-height: 15px;
`;
const SelectWrap = styled.div`
  display: grid;
  align-items: center;
  svg, select {
    grid-area: 1 / 1;
  }
  svg {
    justify-self: end;
    margin-right: 7px;
    pointer-events: none;
  }
`;
const Coolant = styled.select`
  appearance: none;
  width: 138px;
  height: 34px;
  padding-left: 8px;
  background: #fff;
  border: 2px solid #dcdcdc;
  border-radius: 2px;
`;
const Divider = styled.hr`
  height: 3px;
  margin: 8px 17px 0 0;
  border: none;
  background: #c0c0c0;
`;
const FeedList = styled.div`
  display: grid;
  grid-auto-rows: 1fr;
  min-height: 377px;
`;
const FeedRow = styled.div`
  display: flex;
  align-items: center;
  padding-left: 15px;
  label {
    width: 149px;
  }
`;
const SpinBox = styled.div`
  display: flex;
  width: 126px;
  height: 26px;
  border: 1px solid #c8c8c8;
  background: #fff;
  input {
    flex: 1;
    min-width: 0;
    padding: 0 0 2px 3px;
    border: none;
    background: none;
  }
`;
const Spinner = styled.div`
  display: grid;
  width: 17px;
  background: #e6e6e6;
  border: solid #d0d0d0;
  border-width: 0 1px 0 0;
  button {
    display: grid;
    place-content: center;
    background: none;
    border: none;
  }
  button + button {
    border-top: 1px solid #d6d6d6;
  }
  path {
    fill: #111;
  }
`;
const PanelFooter = styled.div`
  display: flex;
  align-items: center;
  gap: 12px;
  height: 45px;
  padding: 0 14px 0 10px;
  border-top: 1px solid #c8c8c8;
  svg {
    margin-right: auto;
  }
`;
const PanelButton = styled.button`
  width: 75px;
  height: 24px;
  background: #e8e8e8;
  border: 1px solid #bdbdbd;
  color: #777;
  font-size: 15px;
`;

const Overlay = styled.div`
  position: absolute;
  inset: 0;
  display: flex;
  padding: 78px 334px 155px 331px;
  pointer-events: none;
`;
const Dialog = styled.section`
  flex: 1;
  display: flex;
  flex-direction: column;
  min-width: 0;
  background: #fff;
  box-shadow: 0 4px 18px rgba(0, 0, 0, .4);
  color: #111;
  font-family: "Noto Sans", "Open Sans", sans-serif;
  font-size: 14px;
  pointer-events: auto;
`;
const TitleBar = styled.div`
  display: flex;
  align-items: center;
  gap: 6px;
  height: 37px;
  padding: 0 10px 0 11px;
  h1 {
    flex: 1;
    margin: 0;
    font-size: 14px;
    font-weight: 400;
  }
`;
const CloseButton = styled.button`
  display: grid;
  place-content: center;
  width: 24px;
  height: 24px;
  background: none;
  border: none;
`;
const FilterBar = styled.div`
  display: flex;
  align-items: center;
  height: 47px;
  margin: 16px 35px 10px 21px;
`;
const Filters = styled.div`
  display: flex;
  gap: 8px;
  margin-left: 17px;
`;
const FilterButton = styled.button`
  width: ${(p) => (p.$wide ? 84 : 80)}px;
  height: 47px;
  background: #fff;
  border: 1px solid #c4c4c4;
  border-radius: 4px;
  color: #777;
  font-size: 12px;
`;
const SearchBox = styled.input`
  width: 149px;
  height: 47px;
  padding-left: 3px;
  border: 1px solid #c4c4c4;
  border-radius: 4px;
  font-size: 12px;
  &::placeholder {
    color: #b4b4b4;
  }
`;
const ClearButton = styled.button`
  display: grid;
  place-content: center;
  width: 47px;
  height: 47px;
  background: #c0c0c0;
  border: none;
  border-radius: 3px;
`;
const NewTools = styled.div`
  display: flex;
  gap: 18px;
  margin-left: auto;
`;
const Panes = styled.div`
  flex: 1;
  display: grid;
  grid-template-columns: 250px minmax(0, 1fr) 312px;
  gap: 7px;
  min-height: 0;
  margin: 0 15px;
  background: #f0f0f0;
`;
const Pane = styled.div`
  display: flex;
  flex-direction: ${(p) => (p.$column ? 'column' : 'row')};
  min-width: 0;
  min-height: 0;
  background: #fff;
  border: 1px solid #828790;
  overflow: hidden;
`;
const PaneMain = styled.div`
  flex: 1;
  display: flex;
  flex-direction: column;
`;
const PaneHead = styled.div`
  height: 34px;
  padding-right: 1px;
  border-bottom: 1px solid #d0d0d0;
  color: #7a7a7a;
  font-weight: 600;
  line-height: 34px;
  text-align: center;
`;
const LibraryList = styled.ul`
  flex: 1;
  display: grid;
  grid-auto-rows: 1fr;
  margin: 0 0 -2px;
  padding: 0;
  list-style: none;
`;
const LibraryItem = styled.li`
  display: flex;
  align-items: center;
  min-height: 0;
  padding-left: ${(p) => 5 + p.$level * 25}px;
`;
const Expander = styled.span`
  width: 20px;
`;
const CheckLabel = styled.label`
  flex: 1;
  display: flex;
  align-items: center;
  gap: 8px;
  height: 21px;
  margin-right: 2px;
  padding-left: 4px;
  background: ${(p) => (p.$active ? '#d8d8d8' : 'none')};
  font-weight: ${(p) => (p.$active ? 700 : 400)};
  white-space: nowrap;
`;
const Check = styled.input`
  appearance: none;
  display: grid;
  justify-content: center;
  flex: none;
  width: 16px;
  height: 16px;
  border: 1px solid #333;
  background: #fff;
  &:checked::after {
    content: '';
    width: 5px;
    height: 10px;
    border: solid #444;
    border-width: 0 2px 2px 0;
    transform: rotate(42deg);
  }
`;
const ScrollBar = styled.div`
  display: flex;
  flex-direction: ${(p) => (p.$horizontal ? 'row' : 'column')};
  align-items: center;
  flex: none;
  width: ${(p) => (p.$horizontal ? 'auto' : '20px')};
  height: ${(p) => (p.$horizontal ? '20px' : 'auto')};
  padding: 3px;
  background: #f0f0f0;
  svg:last-child {
    margin: ${(p) => (p.$horizontal ? '0 0 0 auto' : 'auto 0 0')};
  }
`;
const Thumb = styled.div`
  flex: none;
  width: ${(p) => (p.$horizontal ? p.$size : 20)}px;
  height: ${(p) => (p.$horizontal ? 20 : p.$size)}px;
  margin: ${(p) => (p.$horizontal ? '0 0 0 4px' : '4px 0 0')};
  background: #cdcdcd;
`;
const TableWrap = styled.div`
  flex: 1;
  overflow: hidden;
`;
const ToolsTable = styled.table`
  table-layout: fixed;
  width: calc(100% + 43px);
  border-collapse: collapse;
  col {
    width: 125px;
  }
  .name {
    width: auto;
  }
  th {
    position: relative;
    height: 34px;
    padding: 0;
    border: solid #c8c8c8;
    border-width: 0 1px 1px 0;
    color: #808080;
    font-weight: 600;
    white-space: nowrap;
  }
  td {
    height: 21px;
    padding: 0;
    line-height: 21px;
  }
`;
const SortMark = styled.svg`
  position: absolute;
  top: 0;
  left: calc(50% - 5px);
`;
const GroupRow = styled.tr`
  color: #2ea3d6;
  border-bottom: 2px solid #4bb4da;
  div {
    display: flex;
    align-items: center;
    gap: 5px;
    height: 20px;
  }
`;
const ToolRow = styled.tr`
  td + td {
    padding-right: 4px;
    background: #cce6ff;
    text-align: right;
  }
`;
const NameCell = styled.div`
  display: flex;
  align-items: center;
  gap: 9px;
  padding-left: 29px;
  div {
    flex: 1;
    display: flex;
    align-items: center;
    gap: 13px;
    padding-left: 6px;
    height: 21px;
    border: 1px dotted #222;
    background: #cce6ff;
    white-space: nowrap;
  }
`;
const InfoColumn = styled.div`
  display: grid;
  grid-template-rows: 250px 1fr;
  gap: 7px;
`;
const InfoBody = styled.div`
  flex: 1;
  padding: 6px 21px 0 6px;
`;
const InfoTable = styled.table`
  table-layout: fixed;
  width: 100%;
  border-spacing: 2px;
  font: 12px "DejaVu Sans Condensed", "DejaVu Sans", sans-serif;
  line-height: 15px;
  .label {
    width: 125px;
  }
  th, td {
    padding: 0;
    text-align: left;
    vertical-align: top;
  }
  .title {
    height: 16px;
    color: #1ba1d8;
    font-size: 13px;
    text-align: center;
  }
`;
const InfoRow = styled.tr`
  th, td {
    height: ${(p) => (p.$shade ? 15 : 16)}px;
    background: ${(p) => (p.$shade ? '#ececec' : 'none')};
  }
  td {
    text-align: ${(p) => (p.$right ? 'right' : 'left')};
  }
`;
const Preview = styled.div`
  background: #ebe8d7;
  border: 1px solid #828790;
`;
const Actions = styled.div`
  display: flex;
  justify-content: flex-end;
  gap: 10px;
  padding: 10px 16px 15px;
`;
const DialogButton = styled.button`
  width: 91px;
  height: 26px;
  background: #e1e1e1;
  border: ${(p) => (p.$primary ? '2px solid #0078d7' : '1px solid #adadad')};
  font-size: 12px;
`;

const Footer = styled.footer`
  display: grid;
  grid-template-columns: 1fr auto 1fr;
  align-items: center;
  padding: 0 3px 3px 2px;
`;
const Comments = styled.div`
  display: flex;
  align-items: center;
  justify-content: space-between;
  width: 374px;
  height: 33px;
  padding: 0 12px 0 31px;
  background: #f0f0f0;
  border-right: 2px solid #bbb;
  color: #555;
  font-size: 12px;
`;
const NavBar = styled.nav`
  display: flex;
  align-items: center;
  height: 30px;
  padding: 0 14px 0 0;
  background: #f0f0f0;
`;
const NavButton = styled.button`
  display: flex;
  align-items: center;
  gap: 3px;
  padding: 0 ${(p) => (p.$menu ? 3 : 6)}px;
  margin-right: ${(p) => (p.$gap ? 12 : 0)}px;
  background: none;
  border: none;
`;

export default App;
